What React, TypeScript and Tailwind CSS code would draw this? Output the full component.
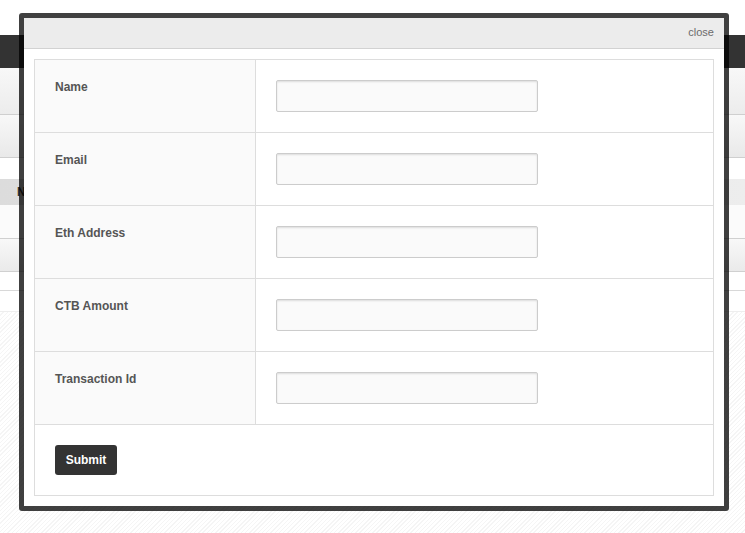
import React from "react";

const fields = ["Name", "Email", "Eth Address", "CTB Amount", "Transaction Id"];

export default function App() {
  return (
    <div className="relative w-[745px] h-[533px] overflow-hidden bg-white font-['Liberation_Sans',Arial,sans-serif]">
      {/* background page */}
      <div className="flex flex-col h-full">
        <div className="h-[35px] bg-white" />
        <div className="h-[33px] bg-[#333]" />
        <div className="h-[47px] bg-gradient-to-b from-[#f8f8f8] to-[#ececec] border-b border-[#cfcfcf]" />
        <div className="h-[43px] bg-gradient-to-b from-[#f8f8f8] to-[#e9e9e9] border-b border-[#cfcfcf]" />
        <div className="h-[21px] bg-white" />
        <div className="h-[26px] bg-gradient-to-r from-[#dcdcdc] to-[#ededed] flex items-center pl-[17px] text-[12px] font-bold text-[#333]">Name</div>
        <div className="h-[34px] bg-[#fbfbfb] border-b border-[#d0d0d0]" />
        <div className="h-[33px] bg-gradient-to-b from-[#f8f8f8] to-[#eaeaea] border-b border-[#d0d0d0]" />
        <div className="h-[19px] bg-white border-b border-[#d8d8d8]" />
        <div className="h-[21px] bg-white border-b border-[#eee]" />
        <div className="flex-1 bg-[repeating-linear-gradient(-45deg,#ffffff_0px,#ffffff_2px,#f5f5f5_2px,#f5f5f5_3px)]" />
      </div>

      {/* modal */}
      <div className="absolute left-[19px] top-[13px] w-[710px] h-[498px] border-[5px] border-black/75 rounded-[3px] bg-white bg-clip-padding flex flex-col">
        <div className="h-[31px] shrink-0 bg-[#ececec] border-b border-[#d2d2d2] flex items-center justify-end pr-[10px]">
          <span className="text-[11px] text-[#6b6b6b] leading-none mt-[-2px]">close</span>
        </div>
        <div className="p-[10px]">
          <div className="border border-[#dddddd]">
            {fields.map((f) => (
              <div key={f} className="grid grid-cols-[221px_1fr] border-b border-[#dddddd]">
                <div className="bg-[#fafafa] border-r border-[#dddddd] px-[20px] pt-[20px] text-[12px] leading-[14px] font-bold text-[#555]">
                  {f}
                </div>
                <div className="p-[20px]">
                  <input
                    type="text"
                    className="block w-[262px] h-[32px] border border-[#cccccc] rounded-[2px] bg-[#fafafa] shadow-[inset_0_1px_2px_rgba(0,0,0,0.12)] outline-none"
                  />
                </div>
              </div>
            ))}
            <div className="h-[70px] p-[20px]">
              <button className="w-[62px] h-[30px] bg-[#333] rounded-[3px] text-white text-[12px] font-bold leading-none">
                Submit
              </button>
            </div>
          </div>
        </div>
      </div>
    </div>
  );
}
